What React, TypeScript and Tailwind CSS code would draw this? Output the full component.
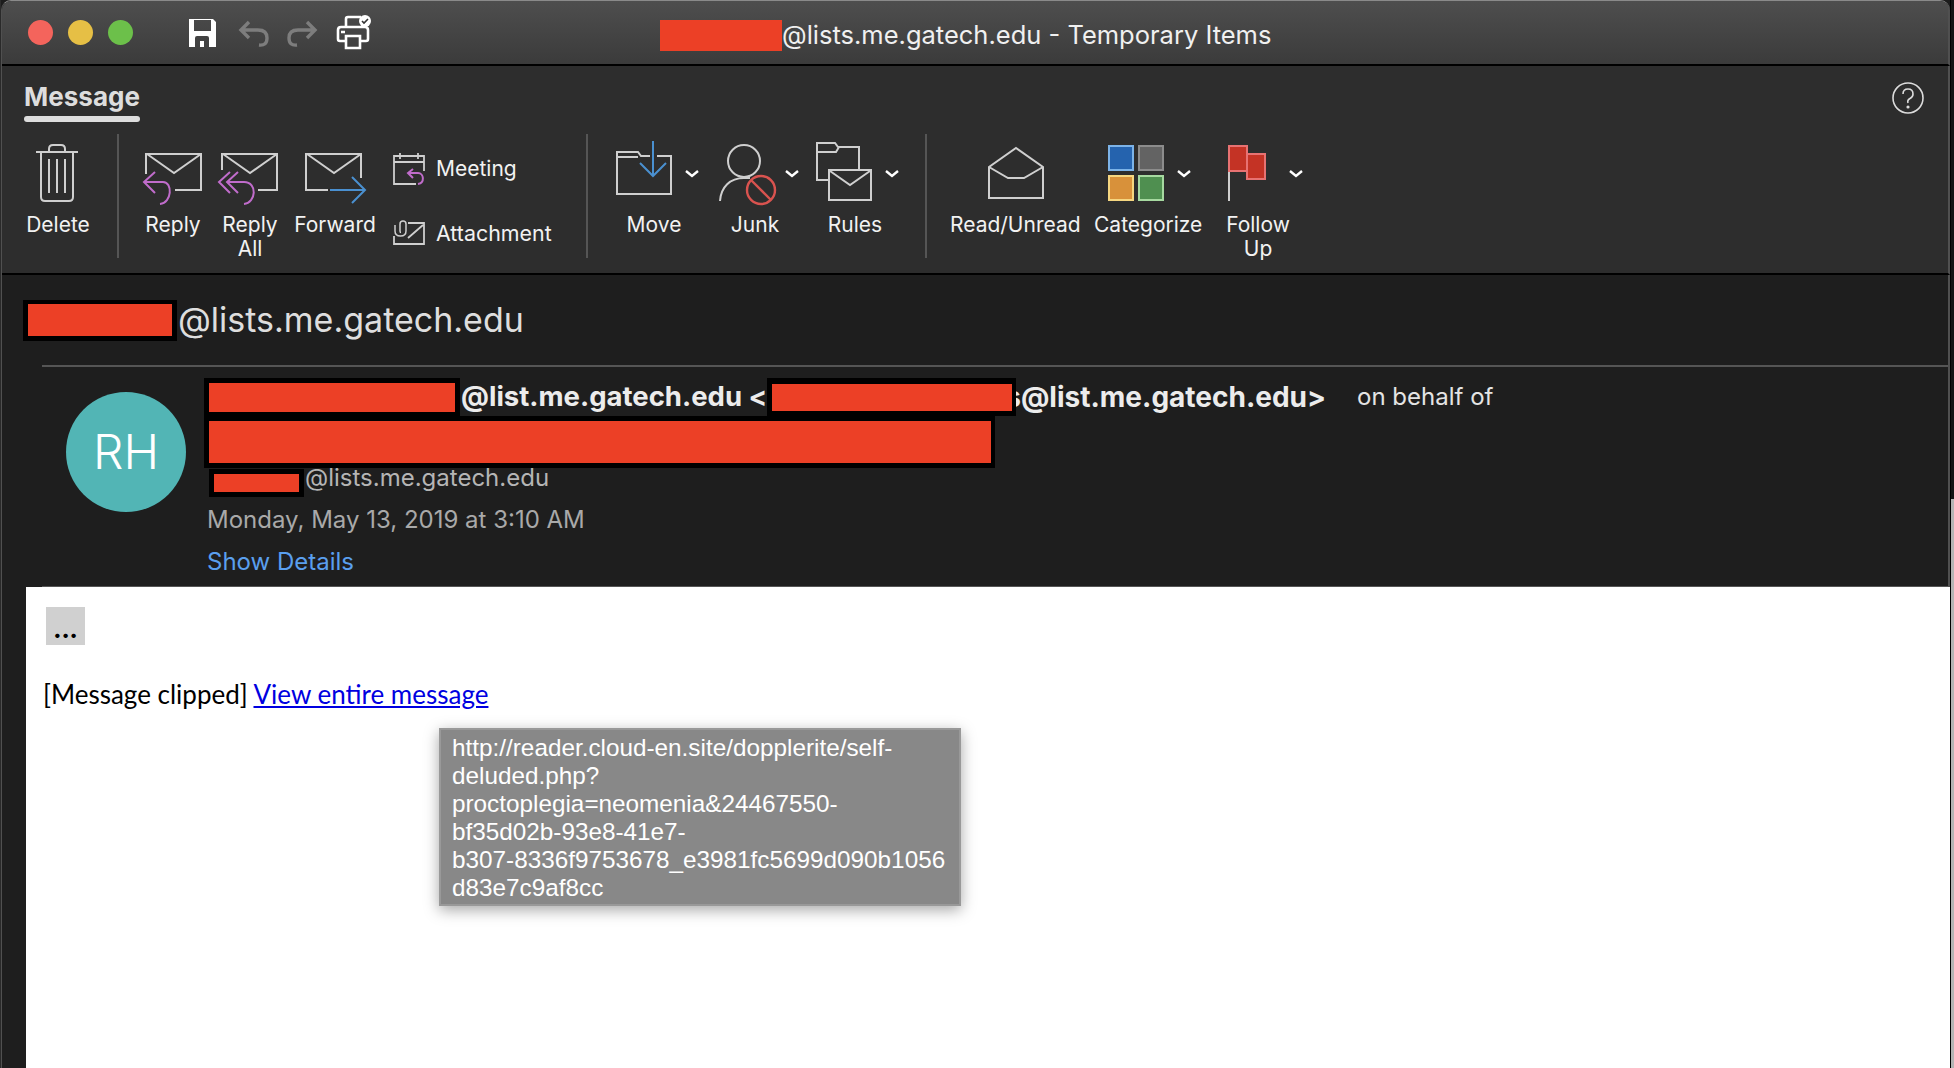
import type { ReactNode } from "react"

const sans = "font-['Inter','Liberation_Sans',sans-serif]"
const line = "#cfcfcf"
const purple = "#c06ccb"
const blue = "#4a90d0"

function Redact({ w, h, rw, rh, className = "" }: { w: number; h: number; rw: number; rh: number; className?: string }) {
  return (
    <span className={`flex shrink-0 items-center justify-center bg-black ${className}`} style={{ width: w, height: h }}>
      <span className="block bg-[#ec4026]" style={{ width: rw, height: rh }} />
    </span>
  )
}

function Chevron({ x }: { x: number }) {
  return <path d={`M${x} 170l6 5 6-5`} fill="none" stroke="#fff" strokeWidth="2.4" />
}

// viewBox of each icon is written in page coordinates, it was easier to measure that way
function RibbonButton({ x, w, label, className = "", children }: { x: number; w: number; label: ReactNode; className?: string; children: ReactNode }) {
  return (
    <div className={`shrink-0 text-center ${className}`} style={{ width: w }}>
      <svg width={w} height={78} viewBox={`${x} 134 ${w} 78`} fill="none" stroke={line} strokeWidth="2" className="block">
        {children}
      </svg>
      <div className="whitespace-nowrap text-[21px] leading-[24px] text-[#f2f2f2]">{label}</div>
    </div>
  )
}

function Divider({ className = "" }: { className?: string }) {
  return <div className={`mt-[-1px] h-[124px] w-[2px] shrink-0 bg-[#555555] ${className}`} />
}

export default function App() {
  return (
    <div className={`flex h-[1068px] w-[1954px] overflow-hidden bg-[#1c1c1c] ${sans}`}>
      <div className="w-[1px] shrink-0 bg-[#2a2a2a]" />
      <div className="flex w-[1949px] shrink-0 flex-col overflow-hidden rounded-t-[10px] border-l border-t border-l-[#505050] border-t-[#8a8a8a]">
        {/* title bar */}
        <div className="relative flex h-[65px] shrink-0 items-center border-b-2 border-r-2 border-b-black border-r-[#505050] bg-gradient-to-b from-[#4e4e4e] to-[#3b3b3b]">
          <div className="ml-[26px] flex gap-[15px]">
            <span className="size-[25px] rounded-full bg-[#f4645c]" />
            <span className="size-[25px] rounded-full bg-[#e6bf45]" />
            <span className="size-[25px] rounded-full bg-[#6cc04a]" />
          </div>
          <svg width="190" height="40" viewBox="186 14 190 40" className="ml-[54px] block shrink-0" fill="none">
            <path fillRule="evenodd" fill="#fff" d="M188 20h24l3 3v25h-27zM193 21v11h17V21zM194 48v-9q0-2 2-2h10q2 0 2 2v9h-5v-6h-4v6z" />
            <path d="M248 23l-8 8 8 8M241 31h16q9 0 9 8t-8 7" stroke="#7d7d7d" strokeWidth="3.4" />
            <path d="M306 23l8 8-8 8M313 31h-16q-9 0-9 8t8 7" stroke="#7d7d7d" strokeWidth="3.4" />
            <path d="M345 28v-8q0-2 2-2h13M345 42h-6q-2 0-2-2V31q0-3 3-3h24q3 0 3 3v9q0 2-2 2h-6M345 37h14v12h-14zM340 33h4" stroke="#fff" strokeWidth="2.6" />
            <circle cx="364" cy="22" r="6" fill="#fff" />
            <path d="M361 22l2 2 4-4" stroke="#333" strokeWidth="1.6" />
          </svg>
          <div className="absolute left-[658px] top-[18px] flex items-center text-[25.5px] leading-[32px] text-[#f0f0f0]">
            <span className="block h-[31px] w-[122px] bg-[#ec4026]" />
            <span>@lists.me.gatech.edu - Temporary Items</span>
          </div>
        </div>

        {/* ribbon */}
        <div className="relative h-[209px] shrink-0 border-b-2 border-r-2 border-b-black border-r-[#505050] bg-[#2d2d2d]">
          <div className="ml-[22px] mt-[17px] w-[116px] text-center text-[26px] font-bold leading-[28px] text-[#dddddd]">Message</div>
          <div className="ml-[22px] mt-[5px] h-[6px] w-[116px] rounded-full bg-[#dddddd]" />
          <svg width="32" height="32" viewBox="0 0 32 32" fill="none" className="absolute right-[24px] top-[16px]" stroke="#dcdcdc" strokeWidth="1.6">
            <circle cx="16" cy="16" r="15" />
            <path d="M11 12q0-5 5-5t5 5q0 3-3 4.500t-2 4.500" />
            <circle cx="16" cy="25" r="0.8" />
          </svg>

          <div className="ml-[20px] mt-[13px] flex">
            <RibbonButton x={22} w={72} label="Delete">
              <path d="M36 151h42M49 151v-3q0-4 4-4h8q4 0 4 4v3M41 151v45q0 4 4 4h24q4 0 4-4v-45M49 158v34M57 158v34M65 158v34" />
            </RibbonButton>
            <Divider className="ml-[23px]" />
            <RibbonButton x={138} w={70} label="Reply" className="ml-[19px]">
              <path d="M175 189h26v-36h-55v20M147 153l27 19 27-19" />
              <path d="M155 171l-11 10 11 11M144 181h19c10 0 9 21-3 22" stroke={purple} />
            </RibbonButton>
            <RibbonButton x={213} w={74} label={<>Reply<br />All</>} className="ml-[5px]">
              <path d="M258 189h19v-36h-55v16M223 153l27 19 27-19" />
              <path d="M230 171l-11 10 11 11M238 171l-11 10 11 11M227 181h17c14 0 12 21 0 22" stroke={purple} />
            </RibbonButton>
            <RibbonButton x={292} w={86} label="Forward" className="ml-[5px]">
              <path d="M328 189h-22v-36h55v24M307 153l27 19 27-19" />
              <path d="M330 189h34M352 176l13 13-13 13" stroke={blue} />
            </RibbonButton>
            <div className="ml-[15px] flex h-[124px] w-[193px] shrink-0 flex-col text-[21px] text-[#f2f2f2]">
              <div className="mt-[17px] flex h-[34px] items-center">
                <svg width="32" height="34" viewBox="392 151 32 34" fill="none" stroke={line} strokeWidth="1.8" className="block">
                  <path d="M415 183h-22v-28h30v15M393 161h30M399 152v6M417 152v6" />
                  <path d="M412 168l-5 4 5 5M407 172h10c6 0 7 10 0 11" stroke={purple} strokeWidth="2" />
                </svg>
                <span className="ml-[11px] leading-[24px]">Meeting</span>
              </div>
              <div className="mt-[32px] flex h-[30px] items-center">
                <svg width="32" height="30" viewBox="392 215 32 30" fill="none" stroke={line} strokeWidth="1.8" className="block">
                  <path d="M407 220h16v21h-30v-8M407 235l15-13" />
                  <path d="M394 222v6q0 5 5.500 5t5.500-5v-7q0-3-3-3t-3 3v7q0 1.500 1 1.500" strokeWidth="1.500" />
                </svg>
                <span className="ml-[11px] text-[21.4px] leading-[24px]">Attachment</span>
              </div>
            </div>
            <Divider />
            <RibbonButton x={609} w={90} label="Move" className="ml-[21px]">
              <path d="M650 155h-9l-3-4h-21v42h54v-38h-14M617 156h21" />
              <path d="M653 140v35M640 162l13 13 13-13" stroke={blue} />
              <Chevron x={686} />
            </RibbonButton>
            <RibbonButton x={710} w={90} label="Junk" className="ml-[11px]">
              <circle cx="744" cy="160" r="16" />
              <path d="M720 200c1-14 10-23 24-23h6" />
              <circle cx="761" cy="189" r="14" stroke="#d9534f" strokeWidth="2.4" />
              <path d="M751 179l20 20" stroke="#d9534f" strokeWidth="2.4" />
              <Chevron x={786} />
            </RibbonButton>
            <RibbonButton x={810} w={90} label="Rules" className="ml-[10px]">
              <path d="M829 179h-12v-37h18l3 4h21v23M817 151h19l3-5" />
              <path d="M829 169h42v30h-42zM830 170l20 14 20-14" />
              <Chevron x={886} />
            </RibbonButton>
            <Divider className="ml-[25px]" />
            <RibbonButton x={950} w={130} label="Read/Unread" className="ml-[23px]">
              <path d="M989 166v31h54v-31l-27-19zM989 166l19 11h16l19-11" />
            </RibbonButton>
            <RibbonButton x={1094} w={108} label="Categorize" className="ml-[14px]">
              <rect x="1109" y="145" width="24" height="24" fill="#2563ae" stroke="#7cb3e8" />
              <rect x="1139" y="145" width="24" height="24" fill="#636363" stroke="#8c8c8c" />
              <rect x="1109" y="175" width="24" height="24" fill="#d8913a" stroke="#f5d680" />
              <rect x="1139" y="175" width="24" height="24" fill="#4f8f50" stroke="#a6d9a0" />
              <Chevron x={1178} />
            </RibbonButton>
            <RibbonButton x={1213} w={90} label={<>Follow<br />Up</>} className="ml-[11px]">
              <path d="M1229 170v30" />
              <rect x="1229" y="145" width="18" height="25" fill="#c43325" stroke="#e87272" />
              <rect x="1247" y="153" width="18" height="25" fill="#c43325" stroke="#e87272" />
              <Chevron x={1290} />
            </RibbonButton>
          </div>
        </div>

        {/* message header */}
        <div className="flex shrink-0 flex-col border-r-2 border-r-[#505050] bg-[#1e1e1e]">
          <div className="flex h-[90px] items-center pl-[21px]">
            <Redact w={154} h={41} rw={144} rh={32} />
            <span className="ml-[1px] text-[34px] leading-[40px] text-[#dedede]">@lists.me.gatech.edu</span>
          </div>
          <div className="ml-[40px] h-[2px] bg-[#555555]" />
          <div className="flex h-[219px]">
            <div className="ml-[64px] mt-[25px] flex size-[120px] shrink-0 items-center justify-center rounded-full bg-[#52b5b5] text-[48px] font-light text-white">RH</div>
            <div className="ml-[18px] mt-[11px] flex flex-col">
              <div className="flex h-[38px] items-center">
                <Redact w={256} h={38} rw={246} rh={29} />
                <span className="ml-[1px] whitespace-pre text-[27.5px] font-bold text-[#ececec]">@list.me.gatech.edu &lt;</span>
                {/* the redaction sits on top of the tail of the address */}
                <Redact w={249} h={38} rw={240} rh={27} className="relative z-10" />
                <span className="-ml-[11px] whitespace-pre text-[28px] font-bold text-[#ececec]">s@list.me.gatech.edu&gt;</span>
                <span className="ml-[31px] text-[24px] text-[#e4e4e4]">on behalf of</span>
              </div>
              <Redact w={791} h={52} rw={782} rh={42} />
              <div className="flex h-[29px] items-center">
                <Redact w={95} h={28} rw={85} rh={18} className="ml-[5px]" />
                <span className="mb-[10px] ml-[1px] text-[24px] leading-[28px] text-[#b5b5b5]">@lists.me.gatech.edu</span>
              </div>
              <div className="flex h-[46px] items-center pl-[3px] text-[24px] text-[#a9a9a9]">Monday, May 13, 2019 at 3:10 AM</div>
              <div className="flex h-[38px] items-center pl-[3px] text-[24px] text-[#5a9fee]">Show Details</div>
            </div>
          </div>
          <div className="ml-[40px] h-[1px] bg-[#555555]" />
        </div>

        {/* message body */}
        <div className="flex min-h-0 flex-1">
          <div className="w-[24px] shrink-0 bg-[#1e1e1e]" />
          <div className="relative flex-1 bg-white pl-[20px] pt-[20px]">
            <div className="flex h-[38px] w-[39px] items-end justify-center bg-[#d0d0d0] pb-[5px] text-[22px] font-black leading-[20px] text-black">...</div>
            <p className="-ml-[3px] mt-[33px] font-['Lato',sans-serif] text-[26px] leading-[32px] text-black">
              [Message clipped]{" "}
              <a className="text-[#0000e0] underline">View entire message</a>
            </p>
            <div className="absolute left-[413px] top-[141px] h-[178px] w-[522px] border-2 border-[#999999] bg-[#888888] pl-[11px] pt-[4px] font-['Liberation_Sans',sans-serif] text-[24.3px] leading-[28px] text-white shadow-[0_4px_14px_rgba(0,0,0,0.35)]">
              <div>http://reader.cloud-en.site/dopplerite/self-</div>
              <div>deluded.php?</div>
              <div>proctoplegia=neomenia&amp;24467550-</div>
              <div>bf35d02b-93e8-41e7-</div>
              <div>b307-8336f9753678_e3981fc5699d090b1056</div>
              <div>d83e7c9af8cc</div>
            </div>
          </div>
        </div>
      </div>
      <div className="flex flex-1 flex-col border-l border-black">
        <div className="h-[499px] bg-[#141414]" />
        <div className="flex-1 bg-[#b4b4b4]" />
      </div>
    </div>
  )
}
